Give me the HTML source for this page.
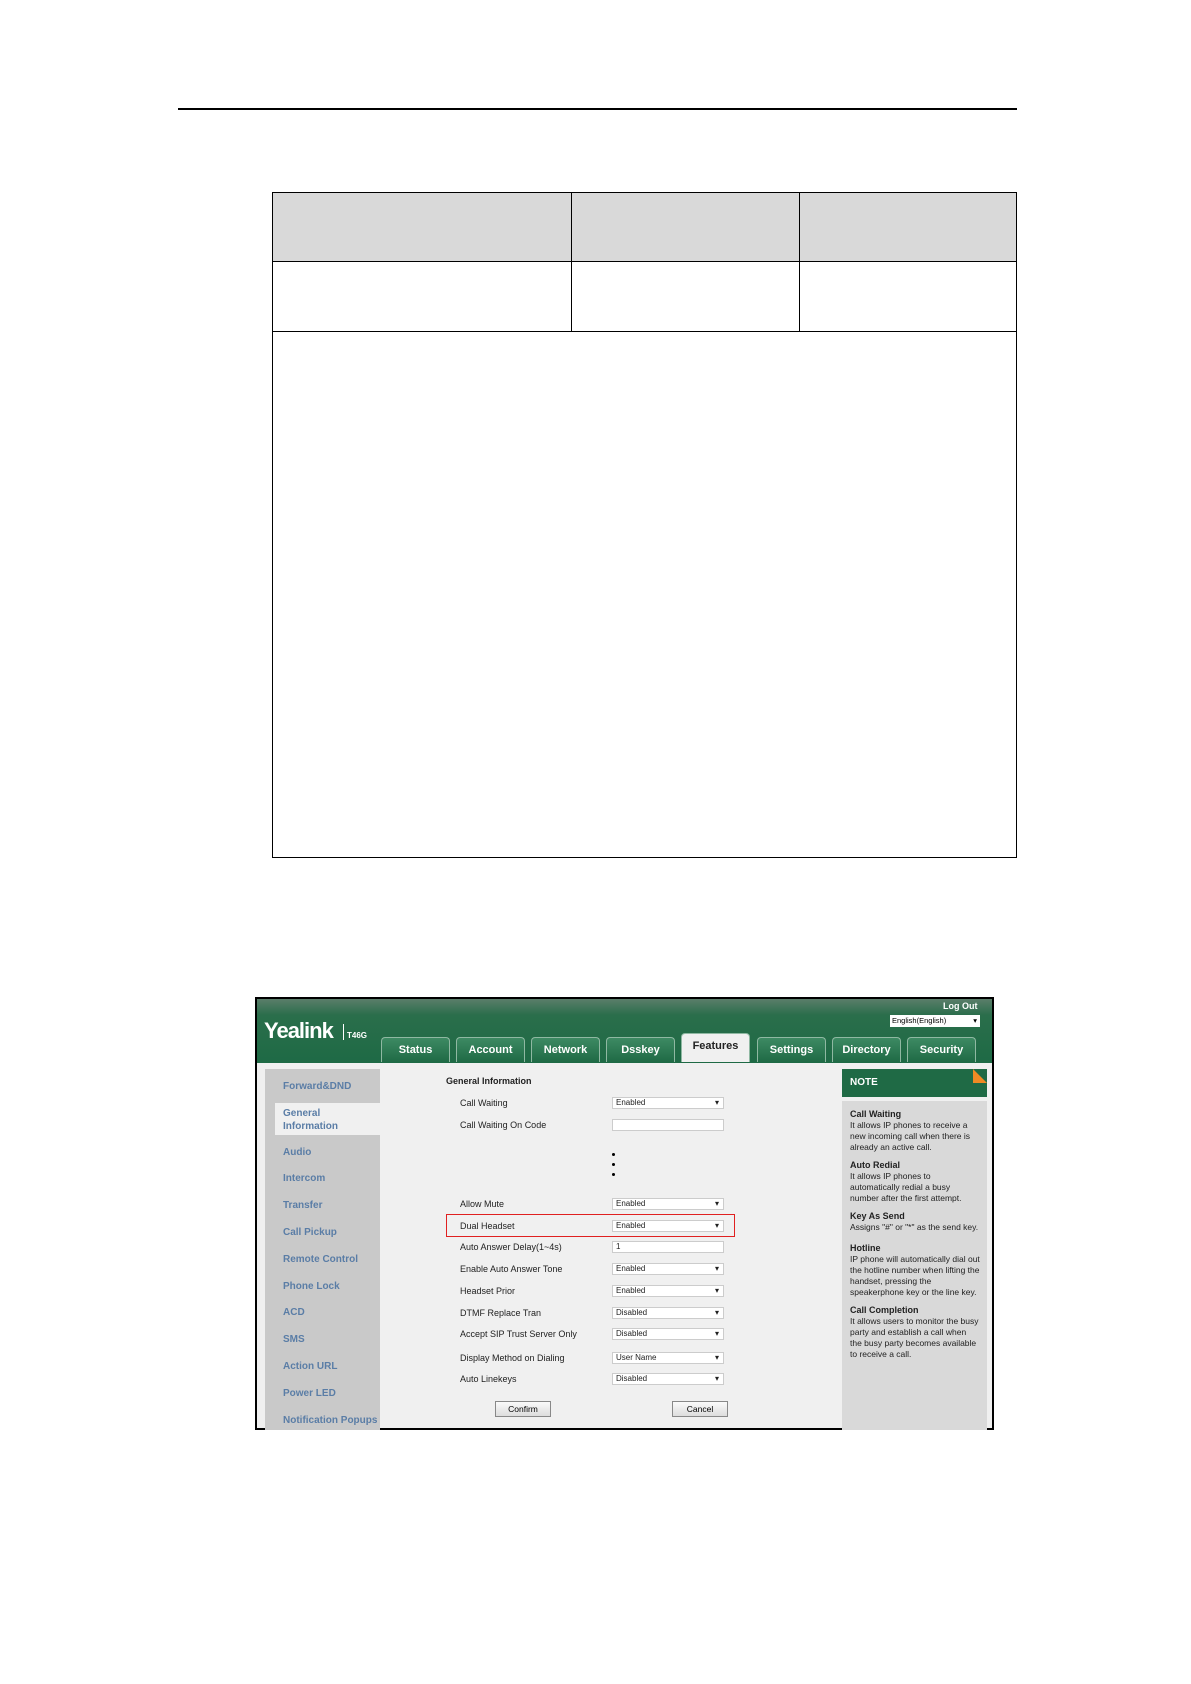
<!DOCTYPE html>
<html><head><meta charset="utf-8"><style>
*{margin:0;padding:0;box-sizing:border-box}
body{width:1191px;height:1684px;background:#fff;position:relative;font-family:"Liberation Sans",sans-serif;overflow:hidden}
.a{position:absolute}
.t{font-size:9px;color:#222;white-space:nowrap}
.sel{position:absolute;left:612px;width:112px;height:12px;background:#fff;border:1px solid #ccc;font-size:8px;line-height:10px;padding-left:3px;color:#222}
.sel:after{content:"▾";position:absolute;right:4px;top:0;font-size:8px}
.sel.n:after{content:""}
.side{position:absolute;left:283px;font-size:10px;color:#5a7da6;font-weight:bold;white-space:nowrap}
.tab{position:absolute;top:1037px;height:25px;background:linear-gradient(#3d8a63,#1f6a45);border:1px solid #8fb8a2;border-bottom:none;border-radius:4px 4px 0 0;color:#fff;font-size:11px;font-weight:bold;text-align:center;line-height:24px}
.nt{font-size:8.5px;line-height:11px;color:#222}
.nt b{font-size:9px}
</style></head><body>
<div class="a" style="left:178px;top:108px;width:839px;height:2px;background:#000"></div>
<div class="a" style="left:272px;top:192px;width:745px;height:666px;border:1px solid #000"></div>
<div class="a" style="left:273px;top:193px;width:743px;height:68px;background:#d9d9d9"></div>
<div class="a" style="left:272px;top:261px;width:745px;height:1px;background:#000"></div>
<div class="a" style="left:272px;top:331px;width:745px;height:1px;background:#000"></div>
<div class="a" style="left:571px;top:192px;width:1px;height:140px;background:#000"></div>
<div class="a" style="left:799px;top:192px;width:1px;height:140px;background:#000"></div>

<div class="a" style="left:255px;top:997px;width:739px;height:433px;border:2px solid #000;background:#f0f0f0;overflow:hidden">
<div class="a" style="left:0;top:0;width:742px;height:64px;background:linear-gradient(#5a7e6a 0,#2a6e4b 25%,#1e6a45 100%)"></div>
</div>
<div class="a" style="left:264px;top:1018px;font-size:22px;font-weight:bold;color:#fff;letter-spacing:-1px">Yealink</div>
<div class="a" style="left:343px;top:1024px;width:1px;height:16px;background:#fff"></div>
<div class="a" style="left:347px;top:1031px;font-size:8px;font-weight:bold;color:#fff">T46G</div>
<div class="a" style="left:943px;top:1001px;font-size:9px;font-weight:bold;color:#fff">Log Out</div>
<div class="a" style="left:890px;top:1015px;width:90px;height:12px;background:#fff;font-size:7.5px;line-height:12px;padding-left:2px">English(English)<span style="position:absolute;right:3px">▾</span></div>
<div class="tab" style="left:381px;width:69px">Status</div>
<div class="tab" style="left:456px;width:69px">Account</div>
<div class="tab" style="left:531px;width:69px">Network</div>
<div class="tab" style="left:606px;width:69px">Dsskey</div>
<div class="tab" style="left:681px;top:1033px;height:29px;width:69px;background:#f0f0f0;color:#222;line-height:24px">Features</div>
<div class="tab" style="left:757px;width:69px">Settings</div>
<div class="tab" style="left:832px;width:69px">Directory</div>
<div class="tab" style="left:907px;width:69px">Security</div>

<div class="a" style="left:265px;top:1069px;width:115px;height:361px;background:#c9c9c9"></div>
<div class="a" style="left:275px;top:1103px;width:108px;height:32px;background:#f0f0f0"></div>
<div class="side" style="top:1081px">Forward&amp;DND</div>
<div class="side" style="top:1107px;line-height:13px">General<br>Information</div>
<div class="side" style="top:1147px">Audio</div>
<div class="side" style="top:1173px">Intercom</div>
<div class="side" style="top:1200px">Transfer</div>
<div class="side" style="top:1227px">Call Pickup</div>
<div class="side" style="top:1254px">Remote Control</div>
<div class="side" style="top:1281px">Phone Lock</div>
<div class="side" style="top:1307px">ACD</div>
<div class="side" style="top:1334px">SMS</div>
<div class="side" style="top:1361px">Action URL</div>
<div class="side" style="top:1388px">Power LED</div>
<div class="side" style="top:1415px">Notification Popups</div>

<div class="a t" style="left:446px;top:1076px;font-weight:bold">General Information</div>
<div class="a t" style="left:460px;top:1098px">Call Waiting</div><div class="sel" style="top:1097px">Enabled</div>
<div class="a t" style="left:460px;top:1120px">Call Waiting On Code</div><div class="sel n" style="top:1119px"></div>
<div class="a" style="left:612px;top:1153px;width:3px;height:3px;background:#000;border-radius:50%"></div>
<div class="a" style="left:612px;top:1163px;width:3px;height:3px;background:#000;border-radius:50%"></div>
<div class="a" style="left:612px;top:1173px;width:3px;height:3px;background:#000;border-radius:50%"></div>
<div class="a t" style="left:460px;top:1199px">Allow Mute</div><div class="sel" style="top:1198px">Enabled</div>
<div class="a t" style="left:460px;top:1221px">Dual Headset</div><div class="sel" style="top:1220px">Enabled</div>
<div class="a" style="left:446px;top:1214px;width:289px;height:23px;border:1.5px solid #e02020"></div>
<div class="a t" style="left:460px;top:1242px">Auto Answer Delay(1~4s)</div><div class="sel n" style="top:1241px">1</div>
<div class="a t" style="left:460px;top:1264px">Enable Auto Answer Tone</div><div class="sel" style="top:1263px">Enabled</div>
<div class="a t" style="left:460px;top:1286px">Headset Prior</div><div class="sel" style="top:1285px">Enabled</div>
<div class="a t" style="left:460px;top:1308px">DTMF Replace Tran</div><div class="sel" style="top:1307px">Disabled</div>
<div class="a t" style="left:460px;top:1329px">Accept SIP Trust Server Only</div><div class="sel" style="top:1328px">Disabled</div>
<div class="a t" style="left:460px;top:1353px">Display Method on Dialing</div><div class="sel" style="top:1352px">User Name</div>
<div class="a t" style="left:460px;top:1374px">Auto Linekeys</div><div class="sel" style="top:1373px">Disabled</div>
<div class="a" style="left:495px;top:1401px;width:56px;height:16px;border:1px solid #888;background:linear-gradient(#fafafa,#ddd);font-size:8.5px;text-align:center;line-height:14px">Confirm</div>
<div class="a" style="left:672px;top:1401px;width:56px;height:16px;border:1px solid #888;background:linear-gradient(#fafafa,#ddd);font-size:8.5px;text-align:center;line-height:14px">Cancel</div>

<div class="a" style="left:842px;top:1069px;width:145px;height:28px;background:#1f6a45;color:#fff;font-size:10px;font-weight:bold;line-height:28px;padding-left:8px">NOTE</div>
<div class="a" style="left:973px;top:1069px;width:0;height:0;border-left:14px solid transparent;border-top:14px solid #f08a24;transform:scale(-1,-1)"></div>
<div class="a" style="left:842px;top:1101px;width:145px;height:329px;background:#d9d9d9"></div>
<div class="a nt" style="left:850px;top:1109px;width:130px">
<b>Call Waiting</b><br>It allows IP phones to receive a new incoming call when there is already an active call.<br><div style="height:7px"></div>
<b>Auto Redial</b><br>It allows IP phones to automatically redial a busy number after the first attempt.<br><div style="height:7px"></div>
<b>Key As Send</b><br>Assigns "#" or "*" as the send key.<br><div style="height:10px"></div>
<b>Hotline</b><br>IP phone will automatically dial out the hotline number when lifting the handset, pressing the speakerphone key or the line key.<br><div style="height:7px"></div>
<b>Call Completion</b><br>It allows users to monitor the busy party and establish a call when the busy party becomes available to receive a call.
</div>
</body></html>
